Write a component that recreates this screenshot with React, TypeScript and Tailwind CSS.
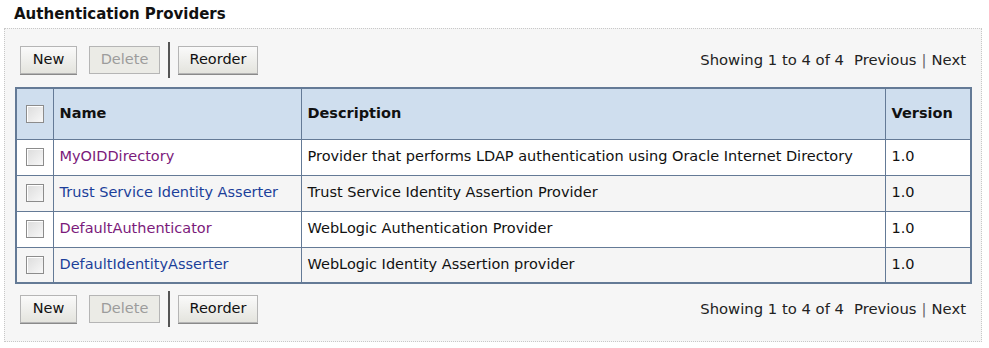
import React from 'react';

const rows = [
  { name: 'MyOIDDirectory', visited: true, desc: 'Provider that performs LDAP authentication using Oracle Internet Directory', version: '1.0' },
  { name: 'Trust Service Identity Asserter', visited: false, desc: 'Trust Service Identity Assertion Provider', version: '1.0' },
  { name: 'DefaultAuthenticator', visited: true, desc: 'WebLogic Authentication Provider', version: '1.0' },
  { name: 'DefaultIdentityAsserter', visited: false, desc: 'WebLogic Identity Assertion provider', version: '1.0' },
];

function Checkbox() {
  return (
    <span className="inline-block align-middle w-[18px] h-[18px] border border-[#8c8c8c] bg-gradient-to-br from-[#dcdcdc] to-[#f8f8f8] shadow-[inset_1px_1px_0_#fff]" />
  );
}

function Btn({ label, disabled, w }: { label: string; disabled?: boolean; w: string }) {
  return (
    <button
      className={`${w} h-[28px] border border-[#b5b5b5] bg-gradient-to-b from-[#fafafa] to-[#e4e4de] text-[14.5px] ${
        disabled ? 'text-[#9c9c9c] bg-none bg-[#ebebe6]' : 'text-[#111] shadow-[0_1px_0_#8a8a8a]'
      }`}
    >
      {label}
    </button>
  );
}

function Toolbar() {
  return (
    <div className="flex items-center justify-between h-[36px]">
      <div className="flex items-center">
        <Btn label="New" w="w-[57px]" />
        <div className="ml-3">
          <Btn label="Delete" disabled w="w-[71px]" />
        </div>
        <div className="w-[2px] h-[36px] bg-[#555] mx-[8px]" />
        <Btn label="Reorder" w="w-[80px]" />
      </div>
      <div className="text-[14.8px] text-[#222] pr-[5px]">
        Showing 1 to 4 of 4<span className="ml-[10px]">Previous</span>
        <span className="mx-[5px] text-[#666]">|</span>Next
      </div>
    </div>
  );
}

export default function App() {
  return (
    <div className="w-[989px] h-[348px] bg-white pl-[4px] pr-[7px]" style={{ fontFamily: '"DejaVu Sans", Tahoma, sans-serif' }}>
      <h2 className="text-[15px] font-bold text-[#111] pl-[10px] h-[28px] pt-[3px]">Authentication Providers</h2>
      <div className="border border-dotted border-[#c8c8c8] bg-[#f6f6f6] h-[314px] pl-[15px] pr-[10px] pt-[13px]">
        <Toolbar />
        <table className="w-[957px] -ml-[5px] mt-[9px] border-collapse border-2 border-[#647a96] text-[14.5px]">
          <thead>
            <tr className="bg-[#cfdeee] h-[51px] text-left">
              <th className="w-[37px] border border-[#647a96] text-center">
                <Checkbox />
              </th>
              <th className="w-[248px] border border-[#647a96] pl-[6px] font-bold text-[#111]">Name</th>
              <th className="w-[584px] border border-[#647a96] pl-[6px] font-bold text-[#111]">Description</th>
              <th className="border border-[#647a96] pl-[6px] font-bold text-[#111]">Version</th>
            </tr>
          </thead>
          <tbody>
            {rows.map((r, i) => (
              <tr key={r.name} className={`h-[36px] ${i % 2 === 0 ? 'bg-white' : 'bg-[#f5f5f5]'}`}>
                <td className="border border-[#647a96] text-center align-middle">
                  <Checkbox />
                </td>
                <td className={`border border-[#647a96] pl-[6px] ${r.visited ? 'text-[#7b1a7b]' : 'text-[#1c3f9a]'}`}>{r.name}</td>
                <td className="border border-[#647a96] pl-[6px] text-[#111]">{r.desc}</td>
                <td className="border border-[#647a96] pl-[6px] text-[#111]">{r.version}</td>
              </tr>
            ))}
          </tbody>
        </table>
        <div className="mt-[7px]">
          <Toolbar />
        </div>
      </div>
    </div>
  );
}
